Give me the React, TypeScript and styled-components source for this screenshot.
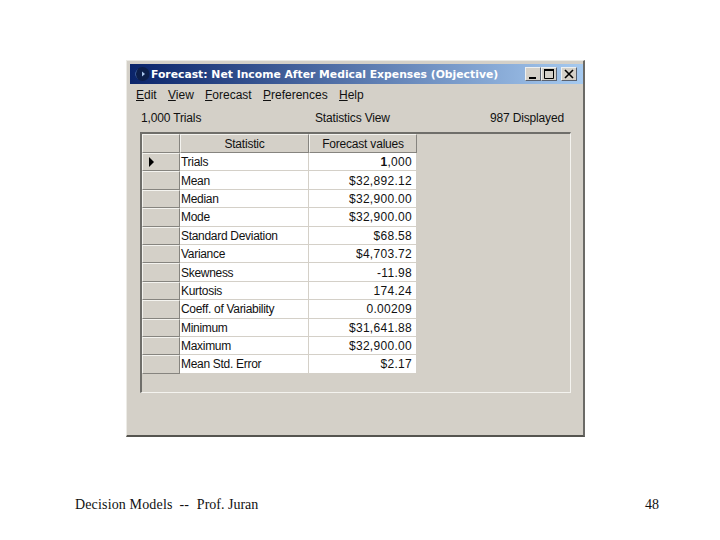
import React from "react";
import styled, { createGlobalStyle } from "styled-components";

const GlobalStyle = createGlobalStyle`
  html, body {
    margin: 0;
    background: #fff;
  }
`;

const Page = styled.div`
  width: 720px;
  height: 540px;
  padding-top: 60px;
  box-sizing: border-box;
  overflow: hidden;
`;

const Window = styled.div`
  width: 459px;
  height: 377px;
  margin-left: 126px;
  box-sizing: border-box;
  padding: 3px 0 0 3px;
  background: #d4d0c8;
  border-top: 1px solid #ecebe6;
  border-left: 1px solid #ecebe6;
  border-right: 2px solid #6b6a66;
  border-bottom: 2px solid #55544f;
  font-family: "Liberation Sans", Arial, sans-serif;
  font-size: 12px;
  color: #111;
`;

const TitleBar = styled.div`
  height: 20px;
  display: flex;
  align-items: center;
  padding-left: 5px;
  background: linear-gradient(90deg, #0a246a 0%, #a6caf0 100%);
`;

const TitleText = styled.span`
  margin-left: 1px;
  font-family: "DejaVu Sans", Verdana, sans-serif;
  font-size: 10.8px;
  font-weight: 700;
  color: #fff;
  white-space: nowrap;
  flex: 1;
`;

const WinButtons = styled.div`
  display: flex;
  align-items: center;
  margin-right: 6px;
`;

const WinButton = styled.div<{ $gap?: boolean }>`
  width: 16px;
  height: 14px;
  margin-left: ${props => (props.$gap ? "4px" : "0")};
  background: #d4d0c8;
  border: 1px solid;
  border-color: #eef0f0 #5a6270 #5a6270 #eef0f0;
  box-sizing: border-box;
  display: flex;
  align-items: center;
  justify-content: center;
`;

const MenuBar = styled.div`
  display: flex;
  padding: 4px 0 0 6px;
  height: 17px;
  font-size: 12px;
`;

const MenuItem = styled.span<{ $width: number }>`
  width: ${props => props.$width}px;
  flex: none;
  u {
    text-underline-offset: 1px;
  }
`;

const StatusRow = styled.div`
  display: grid;
  grid-template-columns: 174px 1fr auto;
  padding: 6px 19px 0 11px;
  height: 21px;
  line-height: 15px;
  letter-spacing: -0.15px;
`;

const GridPanel = styled.div`
  width: 431px;
  height: 261px;
  margin: 0 0 0 10px;
  box-sizing: border-box;
  border-top: 2px solid #6f6e6a;
  border-left: 2px solid #6f6e6a;
  border-right: 1px solid #f4f3ef;
  border-bottom: 1px solid #f4f3ef;
`;

const GridTable = styled.div`
  display: grid;
  grid-template-columns: 38px 129px 108px;
  grid-template-rows: 19px repeat(12, 18.4px);
  width: 275px;
`;

const HeaderCell = styled.div`
  background: #d4d0c8;
  box-sizing: border-box;
  border-right: 1px solid #86847f;
  border-bottom: 1px solid #86847f;
  border-top: 1px solid #f4f3ef;
  border-left: 1px solid #f4f3ef;
  display: flex;
  align-items: center;
  justify-content: center;
  line-height: 14px;
  letter-spacing: -0.2px;
`;

const RowHead = styled(HeaderCell)`
  justify-content: flex-start;
  padding-left: 5px;
`;

const Cell = styled.div<{ $right?: boolean }>`
  background: #fff;
  box-sizing: border-box;
  border-right: 1px solid #d4d0c8;
  border-bottom: 1px solid #d4d0c8;
  padding: 1px ${props => (props.$right ? "4px" : "1px")} 0 1px;
  display: flex;
  align-items: center;
  justify-content: ${props => (props.$right ? "flex-end" : "flex-start")};
  line-height: 14px;
  white-space: pre;
  font-size: 12px;
  letter-spacing: ${props => (props.$right ? "0.3px" : "-0.3px")};
  b {
    font-weight: 700;
  }
`;

const Footer = styled.div`
  display: flex;
  justify-content: space-between;
  margin-top: 60px;
  padding: 0 61px 0 75px;
  font-family: "Liberation Serif", "Times New Roman", serif;
  font-size: 14px;
  color: #111;
  line-height: 16px;
  white-space: pre;
`;

const FooterLead = styled.span`
  letter-spacing: 0.15px;
`;

const FooterGap = styled.span`
  margin-left: 8px;
`;

const rows: [string, React.ReactNode][] = [
  ["Trials", <><b>1</b>,000</>],
  ["Mean", "$32,892.12"],
  ["Median", "$32,900.00"],
  ["Mode", "$32,900.00"],
  ["Standard Deviation", "$68.58"],
  ["Variance", "$4,703.72"],
  ["Skewness", "-11.98"],
  ["Kurtosis", "174.24"],
  ["Coeff. of Variability", "0.00209"],
  ["Minimum", "$31,641.88"],
  ["Maximum", "$32,900.00"],
  ["Mean Std. Error", "$2.17"],
];

function AppIcon() {
  return (
    <svg width="15" height="16" viewBox="0 0 15 16">
      <circle cx="7.5" cy="8" r="7" fill="#0d1f4a" />
      <path d="M3 3a7 7 0 0 0 0 10 6 6 0 0 1 0-10z" fill="#4f76b4" />
      <path d="M7 5.5l3 2.5-3 2.5z" fill="#a9c4ea" />
    </svg>
  );
}

export default function App() {
  return (
    <Page>
      <GlobalStyle />
      <Window>
        <TitleBar>
          <AppIcon />
          <TitleText>Forecast: Net Income After Medical Expenses (Objective)</TitleText>
          <WinButtons>
            <WinButton>
              <svg width="10" height="10" viewBox="0 0 10 10">
                <rect x="1" y="8" width="7" height="2" fill="#000" />
              </svg>
            </WinButton>
            <WinButton>
              <svg width="10" height="10" viewBox="0 0 10 10">
                <path d="M0.5 1.5h9v8h-9z" fill="none" stroke="#000" />
                <rect x="0" y="0" width="10" height="2" fill="#000" />
              </svg>
            </WinButton>
            <WinButton $gap>
              <svg width="10" height="10" viewBox="0 0 10 10">
                <path d="M1 1l8 8M9 1l-8 8" stroke="#000" strokeWidth="1.6" />
              </svg>
            </WinButton>
          </WinButtons>
        </TitleBar>
        <MenuBar>
          <MenuItem $width={32}><u>E</u>dit</MenuItem>
          <MenuItem $width={37}><u>V</u>iew</MenuItem>
          <MenuItem $width={58}><u>F</u>orecast</MenuItem>
          <MenuItem $width={76}><u>P</u>references</MenuItem>
          <MenuItem $width={30}><u>H</u>elp</MenuItem>
        </MenuBar>
        <StatusRow>
          <span>1,000 Trials</span>
          <span>Statistics View</span>
          <span>987 Displayed</span>
        </StatusRow>
        <GridPanel>
          <GridTable>
            <HeaderCell />
            <HeaderCell>Statistic</HeaderCell>
            <HeaderCell>Forecast values</HeaderCell>
            {rows.map(([name, value], index) => (
              <React.Fragment key={name}>
                <RowHead>
                  {index === 0 && (
                    <svg width="7" height="10" viewBox="0 0 7 10">
                      <path d="M1 0l5 5-5 5z" fill="#000" />
                    </svg>
                  )}
                </RowHead>
                <Cell>{name}</Cell>
                <Cell $right>{value}</Cell>
              </React.Fragment>
            ))}
          </GridTable>
        </GridPanel>
      </Window>
      <Footer>
        <span>
          <FooterLead>Decision Models</FooterLead>
          {"  --"}
          <FooterGap>Prof. Juran</FooterGap>
        </span>
        <span>48</span>
      </Footer>
    </Page>
  );
}
